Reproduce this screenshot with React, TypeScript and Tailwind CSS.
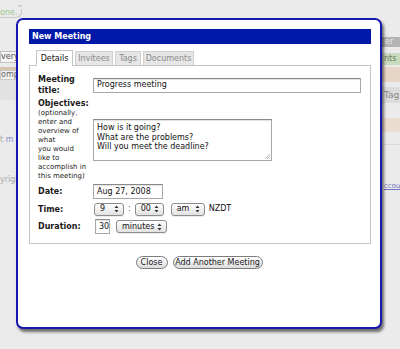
import React from 'react'

// little up/down arrow used by the aqua style selects
function Arrows() {
  return (
    <svg width="5" height="8" viewBox="0 0 5 8" className="shrink-0">
      <path d="M2.5 0.5 L4.5 3 L0.5 3 Z" fill="#333" />
      <path d="M0.5 5 L4.5 5 L2.5 7.5 Z" fill="#333" />
    </svg>
  )
}

function Select({ value, width }: { value: string; width: string }) {
  return (
    <div
      className={`${width} flex h-[13px] items-center justify-between rounded-[3px] border border-[#8c8c8c] bg-gradient-to-b from-white to-[#e2e2e2] pl-[5px] pr-[4px] text-[8px] leading-none text-[#111] shadow-[0_1px_0_rgba(0,0,0,0.08)]`}
    >
      <span>{value}</span>
      <Arrows />
    </div>
  )
}

function TextBox({ value, width }: { value: string; width: string }) {
  return (
    <div
      className={`${width} flex h-[15px] items-center border border-[#a8a8a8] border-t-[#8a8a8a] bg-white px-[3px] text-[8px] leading-none text-[#111] shadow-[inset_0_1px_1px_rgba(0,0,0,0.12)]`}
    >
      {value}
    </div>
  )
}

function PillButton({ label, width }: { label: string; width: string }) {
  return (
    <button
      className={`${width} flex h-[13px] items-center justify-center rounded-full border border-[#7c7c7c] bg-gradient-to-b from-white to-[#dcdcdc] text-[8px] leading-none text-[#1a1a1a]`}
    >
      {label}
    </button>
  )
}

function BackgroundPage() {
  return (
    <div className="flex h-full w-full justify-between text-[8px] leading-none">
      {/* left edge of the page behind the dialog */}
      <div className="flex w-[40px] flex-col whitespace-nowrap">
        <div className="mt-[9px] flex h-[9px] w-[22px] items-start rounded-br-[6px] border-b border-r border-[#c8c8c8] text-[#9cc48c]">
          one.<sup className="text-[5px] text-[#888]">™</sup>
        </div>
        <div className="mt-[33px] flex h-[12px] items-center border border-[#c2c2c2] bg-[#f4f4f4] text-[#555]">
          very
        </div>
        <div className="mt-[4px] h-[3px] bg-[#d8c4ac]" />
        <div className="flex h-[10px] items-center border border-[#c8c8c8] bg-[#f0f0f0] text-[#666]">omp</div>
        <div className="h-[20px] bg-[#e2e2e2]" />
        <div className="mt-[36px] text-[#aaa]">
          t <span className="text-[#8a8ac8]">m</span>
        </div>
        <div className="mt-[32px] text-[#aaa]">yrigh</div>
      </div>

      {/* right edge of the page behind the dialog */}
      <div className="flex w-[18px] flex-col overflow-hidden whitespace-nowrap">
        <div className="mt-[37px] flex h-[10px] items-center bg-[#b4b4b4] pl-[3px] text-[#e8e8e8]">er</div>
        <div className="mt-[6px] flex h-[12px] items-center bg-[#c9dbbf] pl-[2px] text-[#6a7a60]">nts</div>
        <div className="mt-[2px] h-[15px] bg-[#e7d6c5]" />
        <div className="mt-[5px] flex h-[16px] items-center bg-[#dcdcdc] pl-[2px] text-[9px] text-[#888]">Tag</div>
        <div className="mt-[15px] h-[14px] bg-[#eadccf]" />
        <div className="mt-[12px] h-px bg-[#dadada]" />
        <div className="mt-[38px] pl-[2px] text-[7px] text-[#7070c0] underline">ccou</div>
      </div>
    </div>
  )
}

export default function App() {
  return (
    <div className="relative h-[349px] w-[400px] overflow-hidden bg-[#ebebeb] font-['DejaVu_Sans',sans-serif]">
      <BackgroundPage />

      {/* dialog */}
      <div className="absolute left-[16px] top-[18px] flex h-[311px] w-[366px] flex-col rounded-[7px] border-2 border-[#1717b0] bg-white pl-[11px] pr-[9px] pt-[9px] shadow-[2px_3px_3px_rgba(0,0,0,0.55)]">
        <div className="flex h-[15px] items-center bg-[#0019a8] pl-[3px] text-[8px] font-bold leading-none text-white">
          New Meeting
        </div>

        <div className="mt-[6px] flex items-end gap-[2px] pl-[7px] text-[8px] leading-none">
          <div className="relative z-10 -mb-px flex h-[16px] w-[37px] items-center justify-center border border-b-0 border-[#c4c4c4] bg-white text-[#111]">
            Details
          </div>
          <div className="flex h-[14px] w-[38px] items-center justify-center border border-b-0 border-[#d0d0d0] bg-[#e6e6e6] text-[#8a8a8a]">
            Invitees
          </div>
          <div className="flex h-[14px] w-[26px] items-center justify-center border border-b-0 border-[#d0d0d0] bg-[#e6e6e6] text-[#8a8a8a]">
            Tags
          </div>
          <div className="flex h-[14px] w-[51px] items-center justify-center border border-b-0 border-[#d0d0d0] bg-[#e6e6e6] text-[#8a8a8a]">
            Documents
          </div>
        </div>

        <div className="h-[179px] border border-[#c4c4c4] pl-[8px] pt-[8px]">
          <div className="grid grid-cols-[55px_1fr] items-center gap-y-[2px] text-[#1a1a1a]">
            <div className="text-[8px] font-bold leading-[11px]">
              Meeting
              <br />
              title:
            </div>
            <TextBox value="Progress meeting" width="w-[268px]" />

            <div className="pb-[1px]">
              <div className="text-[8px] font-bold leading-[11px]">Objectives:</div>
              <div className="text-[7px] leading-[9px] text-[#222]">
                (optionally,
                <br />
                enter and
                <br />
                overview of
                <br />
                what
                <br />
                you would
                <br />
                like to
                <br />
                accomplish in
                <br />
                this meeting)
              </div>
            </div>
            <div className="relative h-[42px] w-[179px] border border-[#a8a8a8] border-t-[#8a8a8a] bg-white pl-[3px] pt-[3px] text-[8px] leading-[9.5px] text-[#111] shadow-[inset_0_1px_1px_rgba(0,0,0,0.12)]">
              How is it going?
              <br />
              What are the problems?
              <br />
              Will you meet the deadline?
              <svg width="6" height="6" viewBox="0 0 6 6" className="absolute bottom-px right-px">
                <path d="M1 6 L6 1 M3 6 L6 3 M5 6 L6 5" stroke="#999" strokeWidth="0.7" />
              </svg>
            </div>

            <div className="text-[8px] font-bold leading-[11px]">Date:</div>
            <TextBox value="Aug 27, 2008" width="w-[70px]" />

            <div className="text-[8px] font-bold leading-[11px]">Time:</div>
            <div className="flex h-[16px] items-center text-[8px] leading-none">
              <div className="ml-px">
                <Select value="9" width="w-[30px]" />
              </div>
              <span className="mx-[4px] text-[#555]">:</span>
              <Select value="00" width="w-[29px]" />
              <div className="ml-[7px]">
                <Select value="am" width="w-[34px]" />
              </div>
              <span className="ml-[4px] text-[#111]">NZDT</span>
            </div>

            <div className="text-[8px] font-bold leading-[11px]">Duration:</div>
            <div className="flex items-center">
              <div className="ml-[2px]">
                <TextBox value="30" width="w-[15px]" />
              </div>
              <div className="ml-[6px]">
                <Select value="minutes" width="w-[51px]" />
              </div>
            </div>
          </div>
        </div>

        <div className="mt-[12px] flex justify-center gap-[5px] pr-[2px]">
          <PillButton label="Close" width="w-[32px]" />
          <PillButton label="Add Another Meeting" width="w-[90px]" />
        </div>
      </div>
    </div>
  )
}
